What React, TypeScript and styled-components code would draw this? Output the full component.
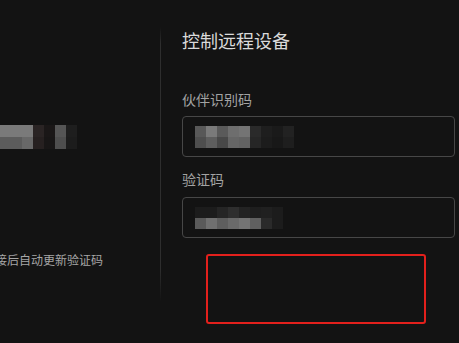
import React from "react";
import styled, { createGlobalStyle } from "styled-components";

const Global = createGlobalStyle`
  html, body { margin: 0; padding: 0; background: #131313; }
  body { font-family: "Noto Sans CJK SC", "Noto Sans", sans-serif; }
`;

const Page = styled.div`
  display: flex;
  width: 459px;
  height: 343px;
  background: #131313;
  overflow: hidden;
`;

const LeftPanel = styled.div`
  width: 160px;
  flex: none;
  overflow: hidden;
  display: flex;
  flex-direction: column;
  padding-top: 125px;
  box-sizing: border-box;
`;

const Divider = styled.div`
  width: 1px;
  flex: none;
  margin-top: 27px;
  height: 275px;
  background: linear-gradient(
    to bottom,
    rgba(48, 48, 48, 0) 0%,
    #2e2e2e 6%,
    #2e2e2e 88%,
    rgba(48, 48, 48, 0) 100%
  );
`;

const RightPanel = styled.div`
  flex: 1;
  display: flex;
  flex-direction: column;
  padding: 28px 4px 0 21px;
  box-sizing: border-box;
`;

const Title = styled.div`
  font-size: 18px;
  line-height: 24px;
  color: #dadada;
  margin-bottom: 37px;
`;

const Label = styled.div`
  font-size: 14px;
  line-height: 20px;
  color: #a3a3a3;
`;

const Field = styled.div<{ $gap: number }>`
  margin-top: ${(p) => p.$gap}px;
  height: 41px;
  box-sizing: border-box;
  border: 1px solid #474747;
  border-radius: 4px;
  display: flex;
  align-items: center;
  padding-left: 12px;
`;

const Mosaic = styled.div<{ $cols: number; $cell: number; $rowH: number }>`
  display: grid;
  grid-template-columns: repeat(${(p) => p.$cols}, ${(p) => p.$cell}px);
  grid-auto-rows: ${(p) => p.$rowH}px;
`;

const Cell = styled.div<{ $c: string }>`
  background: ${(p) => p.$c};
`;

const Hint = styled.div`
  margin-top: 103px;
  margin-left: -5px;
  font-size: 12px;
  line-height: 16px;
  color: #a6a6a6;
  white-space: nowrap;
`;

const Highlight = styled.div`
  margin: 16px 0 0 24px;
  width: 220px;
  height: 70px;
  box-sizing: border-box;
  border: 2px solid #e3201c;
  border-radius: 3px;
`;

const MosaicBlock: React.FC<{ rows: string[][]; cell: number; rowH: number }> = ({
  rows,
  cell,
  rowH,
}) => (
  <Mosaic $cols={rows[0].length} $cell={cell} $rowH={rowH}>
    {rows.flat().map((c, i) => (
      <Cell key={i} $c={c} />
    ))}
  </Mosaic>
);

const leftRows = [
  ["#7a7a7a", "#7a7a7a", "#7a7a7a", "#2a2424", "#1a1717", "#555555", "#1e1e1e"],
  ["#5c5c5c", "#5c5c5c", "#686868", "#262020", "#181616", "#4e4e4e", "#1c1c1c"],
];

const field1Rows = [
  ["#585858", "#7a7a7a", "#5a5a5a", "#6e6e6e", "#747474", "#2a2a2a", "#1e1e1e", "#1a1a1a", "#222222"],
  ["#4e4e4e", "#5e5e5e", "#484848", "#666666", "#626262", "#262626", "#1c1c1c", "#181818", "#1e1e1e"],
];

const field2Rows = [
  ["#1c1c1c", "#1c1c1c", "#252525", "#2e2e2e", "#232323", "#1e1e1e", "#202020", "#1c1c1c"],
  ["#5a5a5a", "#707070", "#5e5e5e", "#6a6a6a", "#747474", "#606060", "#2a2a2a", "#1c1c1c"],
];

export default function App() {
  return (
    <>
      <Global />
      <Page>
        <LeftPanel>
          <MosaicBlock rows={leftRows} cell={11} rowH={12} />
          <Hint>接后自动更新验证码</Hint>
        </LeftPanel>
        <Divider />
        <RightPanel>
          <Title>控制远程设备</Title>
          <Label>伙伴识别码</Label>
          <Field $gap={7}>
            <MosaicBlock rows={field1Rows} cell={11} rowH={11} />
          </Field>
          <Label style={{ marginTop: 12 }}>验证码</Label>
          <Field $gap={8}>
            <MosaicBlock rows={field2Rows} cell={11} rowH={11} />
          </Field>
          <Highlight />
        </RightPanel>
      </Page>
    </>
  );
}
